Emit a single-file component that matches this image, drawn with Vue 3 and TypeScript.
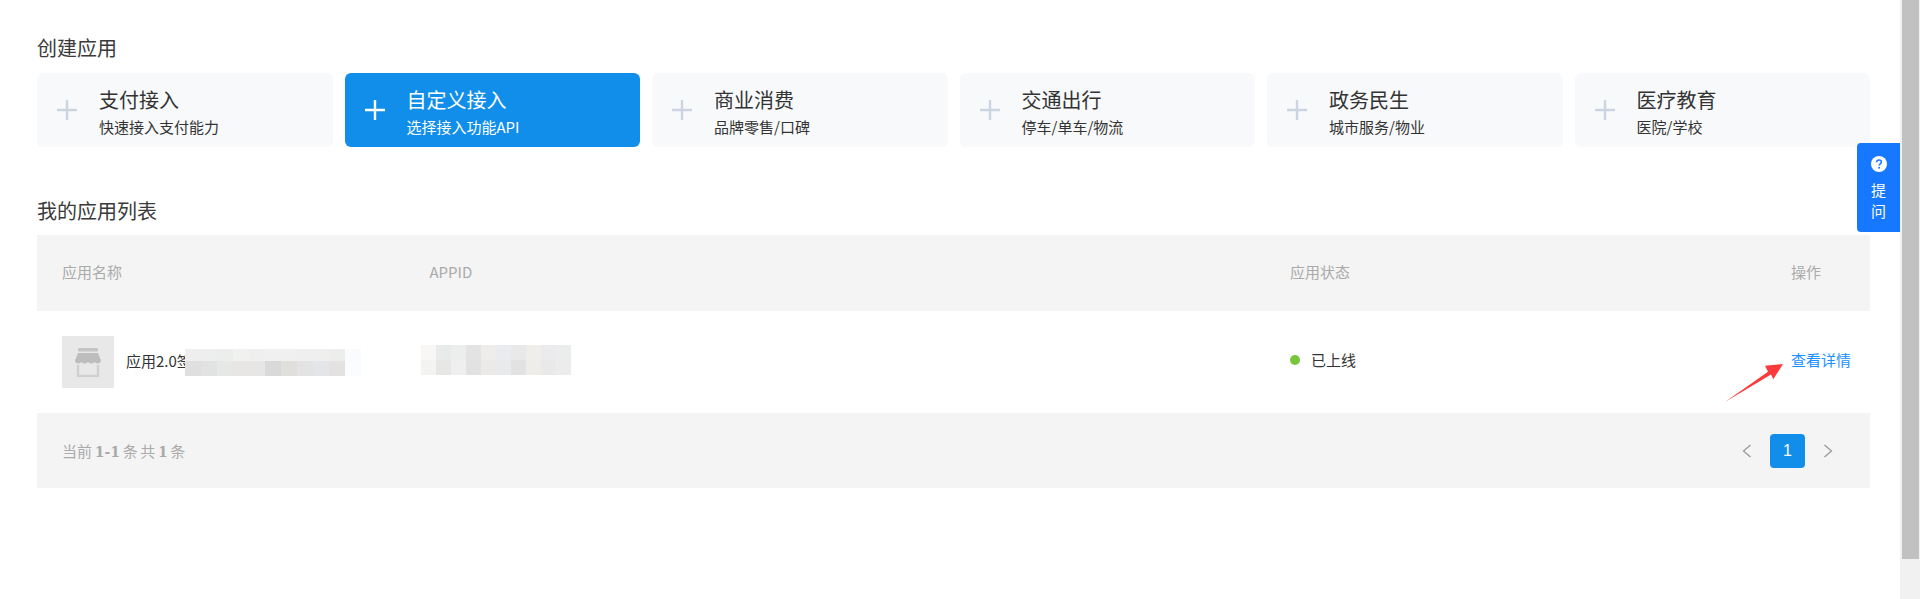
<script setup lang="ts">
interface Card {
  title: string
  desc: string
  active?: boolean
}

const cards: Card[] = [
  { title: '支付接入', desc: '快速接入支付能力' },
  { title: '自定义接入', desc: '选择接入功能API', active: true },
  { title: '商业消费', desc: '品牌零售/口碑' },
  { title: '交通出行', desc: '停车/单车/物流' },
  { title: '政务民生', desc: '城市服务/物业' },
  { title: '医疗教育', desc: '医院/学校' },
]

// blurred-out name and appid, one colour per mosaic cell
const nameMosaic = [
  '#eeeeee', '#eeeeee', '#eceeed', '#f1f1f0', '#efefef', '#f0f0f0', '#f0f0f0', '#efefef', '#efefef', '#ededec', '#fafbfd',
  '#dfdfdf', '#e2e2e2', '#e6e7e7', '#e8e6e4', '#e6e6e6', '#d9d9d9', '#e0dfdc', '#e3e3e3', '#e4e5e8', '#e3e2e0', '#fbfcfe',
]
const appidMosaic = [
  '#f8f7f5', '#e9ebea', '#eceeed', '#e3e3e3', '#eeedeb', '#e9ebee', '#e9e9e9', '#efeeea', '#ebebed', '#ebecec',
  '#f3f3f2', '#e7e7e6', '#eeefee', '#e2e2e2', '#ebeae8', '#e8eaec', '#e2e2e2', '#eeedea', '#e9e9e9', '#ececec',
]
</script>

<template>
  <div class="page">
    <main class="content">
      <h2 class="section-title">创建应用</h2>
      <div class="cards">
        <div v-for="card in cards" :key="card.title" class="card" :class="{ 'card--active': card.active }">
          <svg class="card-plus" width="20" height="20" viewBox="0 0 20 20">
            <path d="M10 0v20M0 10h20" stroke="currentColor" stroke-width="2.4" fill="none" />
          </svg>
          <div class="card-text">
            <div class="card-title">{{ card.title }}</div>
            <div class="card-desc">{{ card.desc }}</div>
          </div>
        </div>
      </div>

      <h2 class="section-title section-title--list">我的应用列表</h2>
      <div class="table">
        <div class="row row--head">
          <div>应用名称</div>
          <div>APPID</div>
          <div>应用状态</div>
          <div class="cell-op">操作</div>
        </div>
        <div class="row row--body">
          <div class="cell-name">
            <div class="thumb">
              <svg width="30" height="30" viewBox="0 0 30 30">
                <rect x="5" y="1" width="20" height="3.5" rx="1.5" fill="#c4c4c4" />
                <path d="M5 6h20l3 7.5c0 2-1.600 3-3.200 3-1.500 0-2.900-.7-3.300-1.800-.5 1.100-1.900 1.800-3.300 1.800s-2.700-.7-3.200-1.800c-.5 1.100-1.800 1.800-3.200 1.800s-2.800-.7-3.300-1.800c-.4 1.100-1.800 1.800-3.300 1.800-1.600 0-3.200-1-3.200-3z" fill="#bdbdbd" />
                <path d="M5 18v11h20V18" fill="none" stroke="#d0d0d0" stroke-width="2.4" />
              </svg>
            </div>
            <span class="name-text">应用2.0签</span>
            <div class="mosaic mosaic--name">
              <i v-for="(c, i) in nameMosaic" :key="i" :style="{ background: c }" />
            </div>
          </div>
          <div class="cell-appid">
            <div class="mosaic mosaic--appid">
              <i v-for="(c, i) in appidMosaic" :key="i" :style="{ background: c }" />
            </div>
          </div>
          <div class="cell-status"><span class="dot" />已上线</div>
          <div class="cell-op">
            <a class="detail-link">查看详情</a>
            <svg class="arrow" width="60" height="40" viewBox="0 0 60 40">
              <path d="M0 39 43 8.700 40 2.700 58 1 48.300 16.300 46 11.500z" fill="#fb3b3b" />
            </svg>
          </div>
        </div>
        <div class="row-foot">
          <div class="total">当前 <b>1-1</b> 条 共 <b>1</b> 条</div>
          <div class="pager">
            <svg width="9" height="14" viewBox="0 0 9 14"><path d="M8.500 1 1.500 7l7 6" fill="none" stroke="#999" stroke-width="1.300" /></svg>
            <span class="pager-num">1</span>
            <svg width="9" height="14" viewBox="0 0 9 14"><path d="m.5 1 7 6-7 6" fill="none" stroke="#999" stroke-width="1.300" /></svg>
          </div>
        </div>
      </div>

      <div class="ask">
        <svg width="16" height="16" viewBox="0 0 16 16">
          <circle cx="8" cy="8" r="8" fill="#fff" />
          <path d="M5.600 6.200C5.700 4.800 6.700 4 8 4s2.400.8 2.400 2.100c0 1.700-2.300 1.800-2.300 3.500" fill="none" stroke="#1677ff" stroke-width="1.500" />
          <circle cx="8.100" cy="11.700" r="1" fill="#1677ff" />
        </svg>
        <span class="ask-text">提问</span>
      </div>
    </main>

    <aside class="scrollbar"><div class="scrollbar-thumb" /></aside>
  </div>
</template>

<style>
body {
  margin: 0;
  background: #fff;
}
</style>

<style scoped>
.page {
  display: flex;
  height: 599px;
  overflow: hidden;
  font-family: "Noto Sans CJK SC", "Liberation Sans", sans-serif;
  color: #333;
}

.content {
  position: relative;
  flex: 1;
  min-width: 0;
  padding: 36px 30px 0 37px;
}

.section-title {
  margin: 0;
  font-size: 20px;
  line-height: 24px;
  font-weight: 400;
  color: #3a3a3a;
}

.section-title--list {
  margin-top: 52px;
}

.cards {
  display: grid;
  grid-template-columns: repeat(6, 1fr);
  gap: 12px;
  margin-top: 13px;
}

.card {
  display: flex;
  align-items: center;
  height: 74px;
  padding-left: 20px;
  background: #f8f9fb;
  border-radius: 6px;
}

.card--active {
  background: #118eea;
  color: #fff;
}

.card-plus {
  flex: none;
  color: #cbd5e1;
}

.card--active .card-plus {
  color: #fff;
}

.card-text {
  margin-left: 22px;
  padding-top: 3px;
}

.card-title {
  font-size: 20px;
  line-height: 26px;
}

.card-desc {
  margin-top: 4px;
  font-size: 15px;
  line-height: 20px;
}

.table {
  margin-top: 12px;
  font-size: 15px;
}

.row {
  display: grid;
  grid-template-columns: 367.500px 860.500px 1fr auto;
  align-items: center;
  padding-left: 25px;
  box-sizing: border-box;
}

.row--head {
  height: 76px;
  padding-bottom: 4px;
  background: #f4f4f4;
  color: #aaa;
}

.row--body {
  height: 102px;
  color: #333;
}

.cell-name {
  display: flex;
  align-items: center;
  min-width: 0;
}

.thumb {
  display: flex;
  flex: none;
  align-items: center;
  justify-content: center;
  width: 52px;
  height: 52px;
  background: #e8e8e8;
}

.name-text {
  flex: none;
  width: 59px;
  margin-left: 12px;
  padding-bottom: 3px;
  white-space: nowrap;
}

.mosaic {
  display: grid;
  flex: none;
}

.mosaic i {
  display: block;
}

.mosaic--name {
  grid-template-columns: repeat(11, 16px);
  grid-template-rows: 12px 15px;
  filter: blur(0.5px);
}

.mosaic--appid {
  grid-template-columns: repeat(10, 15px);
  grid-template-rows: 15px 15px;
  width: 150px;
  margin-top: -4px;
  margin-left: -9px;
  filter: blur(0.5px);
}

.cell-status {
  display: flex;
  align-items: center;
  padding-bottom: 5px;
}

.dot {
  width: 10px;
  height: 10px;
  margin-right: 11px;
  border-radius: 50%;
  background: #78c63c;
}

.cell-op {
  position: relative;
  justify-self: end;
  padding-right: 19px;
}

.row--body .cell-op {
  padding-bottom: 5px;
}

.row--head .cell-op {
  padding-right: 49px;
}

.detail-link {
  color: #1890ff;
  cursor: pointer;
}

.arrow {
  position: absolute;
  right: 85px;
  top: 14px;
}

.row-foot {
  display: flex;
  align-items: center;
  justify-content: space-between;
  height: 75px;
  padding: 0 37px 0 25px;
  background: #f4f4f4;
  color: #aaa;
}

.total {
  word-spacing: -0.7px;
}

.total b {
  font-family: "DejaVu Serif", serif;
  font-size: 14px;
  font-weight: 700;
}

.pager {
  display: flex;
  align-items: center;
  gap: 19px;
}

.pager-num {
  width: 35px;
  height: 34px;
  border-radius: 4px;
  background: #118eea;
  color: #fff;
  font-family: "Liberation Sans", sans-serif;
  font-size: 16px;
  line-height: 34px;
  text-align: center;
}

.ask {
  position: absolute;
  top: 143px;
  right: 0;
  display: flex;
  flex-direction: column;
  align-items: center;
  width: 43px;
  height: 89px;
  padding-top: 13px;
  box-sizing: border-box;
  border-radius: 4px 0 0 4px;
  background: #1677ff;
  color: #fff;
}

.ask-text {
  width: 15px;
  margin-top: 7px;
  font-size: 15px;
  line-height: 21px;
  text-align: center;
}

.scrollbar {
  flex: none;
  width: 20px;
  padding-left: 2px;
  box-sizing: border-box;
  background: #f1f1f1;
}

.scrollbar-thumb {
  width: 17px;
  height: 559px;
  background: #c1c1c1;
}
</style>
